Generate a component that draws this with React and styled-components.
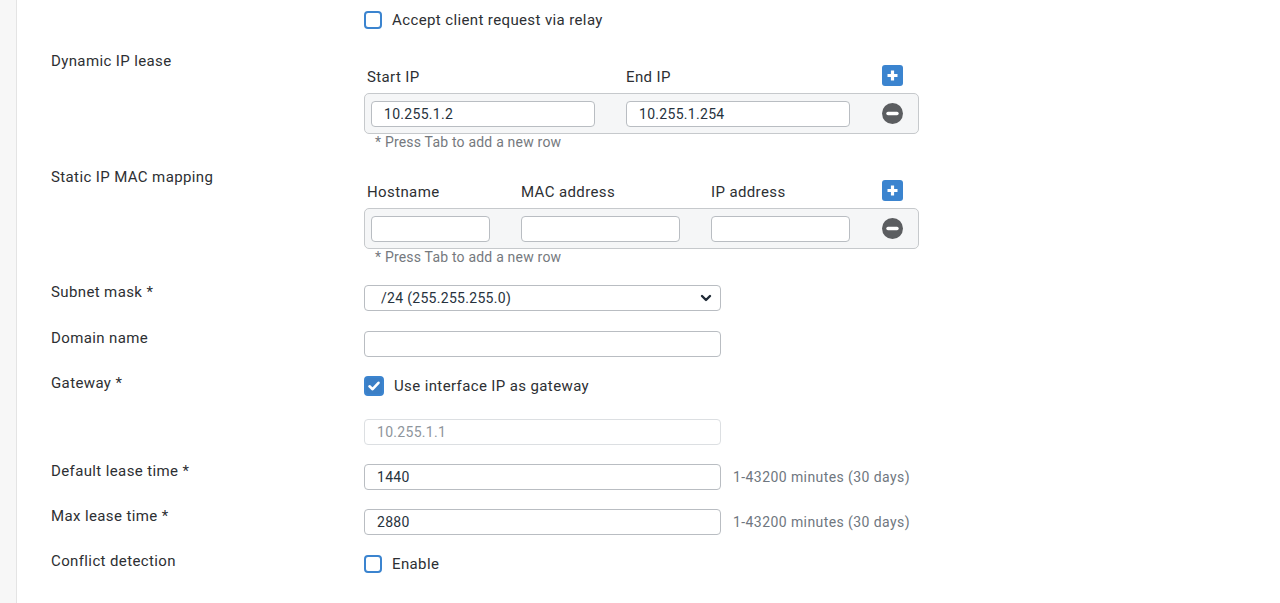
import React from "react";
import styled, { createGlobalStyle } from "styled-components";

const GlobalStyle = createGlobalStyle`
  html, body {
    margin: 0;
    padding: 0;
    background: #ffffff;
  }
  body {
    font-family: Roboto, "Liberation Sans", sans-serif;
    letter-spacing: 0.38px;
    color: #2d2f33;
  }
`;

const Page = styled.div`
  display: flex;
  min-height: 603px;
`;

const Gutter = styled.div`
  width: 16px;
  flex: none;
  background: #f7f7f7;
  border-right: 1px solid #e4e4e4;
`;

const Content = styled.div`
  flex: 1;
  padding: 9px 34px 0;
`;

const Row = styled.div`
  display: grid;
  grid-template-columns: 313px 1fr;
  align-items: start;
  margin-bottom: ${(p) => p.$mb ?? 17}px;
`;

const Label = styled.div`
  font-size: 15px;
  line-height: 18px;
  color: #2d2f33;
`;

const Control = styled.div`
  padding-top: ${(p) => p.$pt ?? 2}px;
  display: flex;
  align-items: center;
  gap: 12px;
`;

const CheckRow = styled.label`
  display: flex;
  align-items: center;
  gap: 10px;
  font-size: 15px;
  line-height: 20px;
  color: #2d2f33;
`;

const Box = styled.span`
  width: ${(p) => (p.$checked ? 20 : 18)}px;
  height: ${(p) => (p.$checked ? 20 : 18)}px;
  box-sizing: border-box;
  border-radius: 4px;
  border: 2px solid #3b84cf;
  background: ${(p) => (p.$checked ? "#3b7fc6" : "#fff")};
  display: inline-flex;
  align-items: center;
  justify-content: center;
  flex: none;
`;

const Input = styled.input`
  box-sizing: border-box;
  width: ${(p) => p.$w ?? 357}px;
  flex: none;
  height: 26px;
  border: 1px solid ${(p) => (p.disabled ? "#dcdfe2" : "#b9bdc2")};
  border-radius: 4px;
  background: #fff;
  padding: 0 12px;
  font-family: inherit;
  font-size: 14px;
  letter-spacing: 0.3px;
  color: ${(p) => (p.disabled ? "#8e959c" : "#27323d")};
  outline: none;
`;

const SelectWrap = styled.div`
  position: relative;
  width: 357px;
`;

const Select = styled.select`
  appearance: none;
  box-sizing: border-box;
  width: 100%;
  height: 26px;
  border: 1px solid #b9bdc2;
  border-radius: 4px;
  background: #fff;
  padding: 0 30px 0 16px;
  font-family: inherit;
  font-size: 14px;
  letter-spacing: 0.3px;
  color: #27323d;
`;

const Chevron = styled.svg`
  position: absolute;
  right: 9px;
  top: 8px;
  pointer-events: none;
`;

const Hint = styled.span`
  font-size: 14px;
  letter-spacing: 0.42px;
  color: #6f7780;
`;

const Table = styled.div`
  width: 555px;
  display: flex;
  flex-direction: column;
`;

const HeadRow = styled.div`
  display: grid;
  grid-template-columns: ${(p) => p.$cols};
  align-items: end;
  height: 22px;
  padding-left: 3px;
  margin-bottom: 7px;
`;

const HeadCell = styled.div`
  font-size: 15px;
  line-height: 18px;
  color: #2d2f33;
`;

const AddButton = styled.button`
  justify-self: end;
  margin-right: 16px;
  width: 21px;
  height: 21px;
  padding: 0;
  border: none;
  border-radius: 3px;
  background: #3b84cf;
  display: inline-flex;
  align-items: center;
  justify-content: center;
`;

const EntryRow = styled.div`
  box-sizing: border-box;
  height: 41px;
  border: 1px solid #c6c9cc;
  border-radius: 5px;
  background: #f5f6f7;
  display: flex;
  align-items: center;
  gap: 31px;
  padding: 0 15px 0 6px;
`;

const RemoveButton = styled.button`
  margin-left: auto;
  flex: none;
  width: 21px;
  height: 21px;
  padding: 0;
  border: none;
  border-radius: 50%;
  background: #5b5d60;
  display: inline-flex;
  align-items: center;
  justify-content: center;
`;

const TableHint = styled.div`
  font-size: 14px;
  line-height: 16px;
  letter-spacing: 0.2px;
  color: #75797e;
  padding: 0 0 0 11px;
`;

const Check = () => (
  <svg width="14" height="14" viewBox="0 0 14 14">
    <path d="M2.5 7.3 L5.6 10.2 L11.5 3.8" fill="none" stroke="#fff" strokeWidth="2.6" strokeLinecap="round" strokeLinejoin="round" />
  </svg>
);

const Checkbox = ({ checked, children }) => (
  <CheckRow>
    <Box $checked={checked}>{checked && <Check />}</Box>
    {children}
  </CheckRow>
);

const Plus = () => (
  <svg width="13" height="13" viewBox="0 0 13 13">
    <path d="M6.5 1.5 V11.5 M1.5 6.5 H11.5" stroke="#fff" strokeWidth="3.2" />
  </svg>
);

const Minus = () => (
  <svg width="13" height="13" viewBox="0 0 13 13">
    <path d="M2 6.5 H11" stroke="#fff" strokeWidth="3.4" strokeLinecap="round" />
  </svg>
);

const EntryTable = ({ cols, heads, widths, values = [] }) => (
  <Table>
    <HeadRow $cols={cols}>
      {heads.map((h) => (
        <HeadCell key={h}>{h}</HeadCell>
      ))}
      <AddButton aria-label="Add row">
        <Plus />
      </AddButton>
    </HeadRow>
    <EntryRow>
      {widths.map((w, i) => (
        <Input key={i} $w={w} defaultValue={values[i] || ""} />
      ))}
      <RemoveButton aria-label="Remove row">
        <Minus />
      </RemoveButton>
    </EntryRow>
    <TableHint>* Press Tab to add a new row</TableHint>
  </Table>
);

export default function App() {
  return (
    <>
      <GlobalStyle />
      <Page>
        <Gutter />
        <Content>
          <Row $mb={22}>
            <Label />
            <Control $pt={1}>
              <Checkbox>Accept client request via relay</Checkbox>
            </Control>
          </Row>

          <Row $mb={18}>
            <Label>Dynamic IP lease</Label>
            <Control $pt={12}>
              <EntryTable
                cols="259px 224px 1fr"
                heads={["Start IP", "End IP"]}
                widths={[224, 224]}
                values={["10.255.1.2", "10.255.1.254"]}
              />
            </Control>
          </Row>

          <Row $mb={18}>
            <Label>Static IP MAC mapping</Label>
            <Control $pt={11}>
              <EntryTable
                cols="154px 190px 170px 1fr"
                heads={["Hostname", "MAC address", "IP address"]}
                widths={[119, 159, 139]}
              />
            </Control>
          </Row>

          <Row $mb={18}>
            <Label>Subnet mask *</Label>
            <Control>
              <SelectWrap>
                <Select defaultValue="24">
                  <option value="24">/24 (255.255.255.0)</option>
                </Select>
                <Chevron width="12" height="10" viewBox="0 0 12 10">
                  <path d="M2 3 L6 7 L10 3" fill="none" stroke="#1f2a36" strokeWidth="2.4" strokeLinecap="round" strokeLinejoin="round" />
                </Chevron>
              </SelectWrap>
            </Control>
          </Row>

          <Row $mb={17}>
            <Label>Domain name</Label>
            <Control>
              <Input />
            </Control>
          </Row>

          <Row $mb={21}>
            <Label>Gateway *</Label>
            <Control>
              <Checkbox checked>Use interface IP as gateway</Checkbox>
            </Control>
          </Row>

          <Row>
            <Label />
            <Control>
              <Input disabled defaultValue="10.255.1.1" />
            </Control>
          </Row>

          <Row>
            <Label>Default lease time *</Label>
            <Control>
              <Input defaultValue="1440" />
              <Hint>1-43200 minutes (30 days)</Hint>
            </Control>
          </Row>

          <Row>
            <Label>Max lease time *</Label>
            <Control>
              <Input defaultValue="2880" />
              <Hint>1-43200 minutes (30 days)</Hint>
            </Control>
          </Row>

          <Row>
            <Label>Conflict detection</Label>
            <Control>
              <Checkbox>Enable</Checkbox>
            </Control>
          </Row>
        </Content>
      </Page>
    </>
  );
}
